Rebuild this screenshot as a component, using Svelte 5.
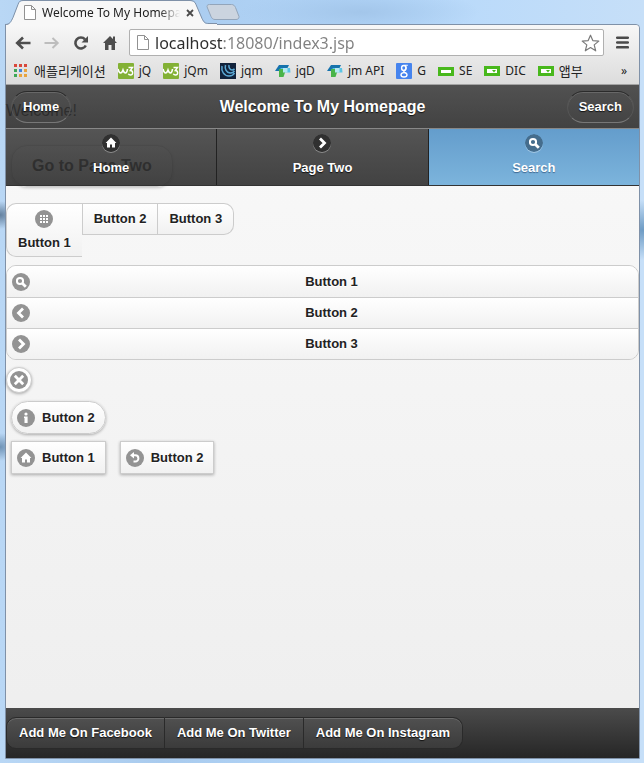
<script>
  const bookmarks = [
    { icon: 'apps', label: '애플리케이션', ko: true },
    { icon: 'w3', label: 'jQ' },
    { icon: 'w3', label: 'jQm' },
    { icon: 'jquery', label: 'jqm' },
    { icon: 'fold', label: 'jqD' },
    { icon: 'fold', label: 'jm API' },
    { icon: 'google', label: 'G' },
    { icon: 'bar', label: 'SE' },
    { icon: 'drop', label: 'DIC' },
    { icon: 'drop', label: '앱부', ko: true }
  ];
  const appColors = ['#d9483b', '#d9483b', '#d9483b', '#3fa757', '#4285dc', '#e8a33d', '#3fa757', '#e8a33d', '#e8a33d'];
  const tabs = [
    { icon: 'home', label: 'Home' },
    { icon: 'right', label: 'Page Two' },
    { icon: 'search', label: 'Search', active: true }
  ];
  const rows = [
    { icon: 'search', label: 'Button 1' },
    { icon: 'left', label: 'Button 2' },
    { icon: 'right', label: 'Button 3' }
  ];
  const socials = ['Facebook', 'Twitter', 'Instagram'];
  let url = $state('localhost:18080/index3.jsp');
</script>

{#snippet disc(name)}
  <svg class="disc" viewBox="0 0 18 18" width="18" height="18" aria-hidden="true">
    <circle class="disc-bg" cx="9" cy="9" r="9" />
    {#if name === 'home'}
      <path d="M9 3.500 3.600 9H5v4.600h3V10.500h2v3.100h3V9h1.400z" fill="#fff" />
    {:else if name === 'right'}
      <path d="m7 4.500 4.500 4.500L7 13.500" class="stroke" />
    {:else if name === 'left'}
      <path d="M11 4.500 6.500 9l4.500 4.500" class="stroke" />
    {:else if name === 'search'}
      <circle cx="8" cy="8" r="3.100" class="stroke thin" />
      <path d="m10.500 10.500 3.300 3.300" class="stroke" />
    {:else if name === 'grid'}
      {#each [5, 8, 11] as y}{#each [5, 8, 11] as x}<rect {x} {y} width="2" height="2" fill="#fff" />{/each}{/each}
    {:else if name === 'close'}
      <path d="m4.800 4.800 8.400 8.400m0-8.400-8.400 8.400" class="stroke" />
    {:else if name === 'info'}
      <circle cx="9" cy="5" r="1.600" fill="#fff" />
      <path d="M7 7.500h3.600V14H7.500V9H7z" fill="#fff" />
    {:else if name === 'back'}
      <path d="M7 6.300h2.300a3.100 3.100 0 0 1 0 6.200H7.500" class="stroke thin" />
      <path d="M8 3v6.600L4 6.300z" fill="#fff" />
    {/if}
  </svg>
{/snippet}

{#snippet sheet()}
  <svg width="12" height="15" viewBox="0 0 12 15" aria-hidden="true">
    <path d="M.5.500h7l4 4v10H.5zM7.500.500v4h4" fill="#fff" stroke="#919191" />
  </svg>
{/snippet}

<div class="desktop">
  <div class="strip">
    <div class="tab">
      <svg class="tab-shape" viewBox="0 0 216 25" width="216" height="25" aria-hidden="true">
        <path d="M0 25c5 0 6-3 8-7l5-13c1-3 2-4 5-4h167c3 0 5 1 6 4l6 14c2 4 3 5 7 5h8v1z" fill="#f7f7f7" />
        <path d="M0 24.500c5 0 6-3 8-7l5-13c1-3 2-4 5-4h167c3 0 5 1 6 4l6 14c2 4 3 5 7 5h8" fill="none" stroke="#7f91a8" />
      </svg>
      {@render sheet()}
      <span class="tab-title">Welcome To My Homepage</span>
      <button class="plain" aria-label="Close tab">
        <svg width="8" height="8" viewBox="0 0 8 8"><path d="m1 1 6 6m0-6L1 7" stroke="#4a4a4a" stroke-width="1.800" /></svg>
      </button>
    </div>
    <button class="plain new-tab" aria-label="New tab">
      <svg width="34" height="16" viewBox="0 0 34 16"><path d="M3.500.500h22c2 0 3 1 4 3l3.500 9c0 2-1 3-3 3H9c-2 0-3-1-4-3L1.500 4C.5 2 1 .5 3.500.500z" fill="#cbd4df" stroke="#93a5ba" /></svg>
    </button>
  </div>

  <div class="window">
    <div class="chrome">
      <div class="toolbar">
        <button class="plain" aria-label="Back"><svg width="16" height="14" viewBox="0 0 16 14"><path d="M15.500 7H3M8 1.500 2.200 7 8 12.500" fill="none" stroke="#4d4d4d" stroke-width="2.600" /></svg></button>
        <button class="plain" aria-label="Forward"><svg width="16" height="14" viewBox="0 0 16 14"><path d="M.5 7H13M8.500 2l5.200 5-5.200 5" fill="none" stroke="#bdbdbd" stroke-width="2" /></svg></button>
        <button class="plain" aria-label="Reload"><svg width="16" height="16" viewBox="0 0 16 16"><path d="M12.800 10.500a5.500 5.500 0 1 1-.8-6.200" fill="none" stroke="#4d4d4d" stroke-width="2.600" /><path d="M15 1v6.500H8.500z" fill="#4d4d4d" /></svg></button>
        <button class="plain" aria-label="Home page"><svg width="16" height="15" viewBox="0 0 16 15"><path d="M8 1 1 8h2v7h3.500v-5h3v5H13V8h2l-2-2V1.500h-2V4z" fill="#4d4d4d" /></svg></button>
        <div class="omnibox">
          {@render sheet()}
          <input type="text" aria-label="Address" bind:value={url} />
          <button class="plain" aria-label="Bookmark this page"><svg width="19" height="18" viewBox="0 0 19 18"><path d="m9.500 1.200 2.300 5.400 6 .5-4.600 3.800 1.500 5.900-5.200-3.200-5.200 3.200 1.500-5.900L1.200 7.100l6-.5z" fill="#fff" stroke="#7a7a7a" stroke-width="1.200" stroke-linejoin="round" /></svg></button>
        </div>
        <button class="plain" aria-label="Menu"><svg width="13" height="13" viewBox="0 0 13 13"><path d="M1.200 1.700h10.600M1.200 6.500h10.600M1.200 11.300h10.600" stroke="#4a4a4a" stroke-width="2.600" stroke-linecap="round" /></svg></button>
      </div>
      <nav class="bookmarks" aria-label="Bookmarks">
        {#each bookmarks as b}
          <a href="#bookmark" class:ko={b.ko}>
            <svg width="16" height="16" viewBox="0 0 16 16" aria-hidden="true">
              {#if b.icon === 'apps'}
                {#each appColors as c, i}<rect x={1 + (i % 3) * 5} y={1 + Math.floor(i / 3) * 5} width="3" height="3" fill={c} />{/each}
              {:else if b.icon === 'w3'}
                <rect width="16" height="16" rx="1" fill="#83b135" />
                <path d="M0 6q1 4 2.500 4T5 7q1 3 2.500 3T9.500 6" fill="none" stroke="#fff" stroke-width="1.600" />
                <path d="M10.500 4.500h4L12.300 7.500c3.200 0 3 4.500.2 4.500-1 0-1.800-.4-2.200-1.200" fill="none" stroke="#fff" stroke-width="1.400" />
              {:else if b.icon === 'jquery'}
                <rect width="16" height="16" fill="#11233c" />
                <path d="M2 3c-1 5 2 10 7 10 2.500 0 4.500-1 5.500-3M5.500 2c-1 4 1 7.500 4.500 8 2 .2 3.500-.6 4.500-2M9 2c-.5 2.500 1 5 3 5 1.200 0 2-.5 2.500-1.200" fill="none" stroke="#5ba9d6" stroke-width="1.500" />
              {:else if b.icon === 'fold'}
                <path d="M4 2h10L11 8H0z" fill="#1673ad" />
                <path d="M5 5h10l.5 4.500H10z" fill="#5bc4e4" />
                <path d="M4 6h6v3.500L8.500 14H4z" fill="#49b449" />
                <path d="M8 5h4.500v4.500H8z" fill="#b4e8f2" />
              {:else if b.icon === 'google'}
                <rect width="16" height="16" rx="1" fill="#4684ee" />
                <ellipse cx="7.800" cy="5" rx="2.200" ry="2.500" fill="none" stroke="#fff" stroke-width="1.400" />
                <ellipse cx="8" cy="11.800" rx="3" ry="2.200" fill="none" stroke="#fff" stroke-width="1.400" />
                <path d="M8.500 2.200h3.300M9.600 3.200c1.200 2-.3 3.800-1.500 4.600s.6 1.300 2 2.300" fill="none" stroke="#fff" stroke-width="1.100" />
              {:else if b.icon === 'bar'}
                <rect x="1.500" y="5.500" width="13" height="6" fill="#fff" stroke="#48b81c" stroke-width="3" />
              {:else}
                <rect y="3" width="16" height="10" fill="#48b81c" />
                <rect x="3" y="6" width="10" height="4" fill="#fff" />
                <path d="M8 7h4l-2 2.500z" fill="#48b81c" />
              {/if}
            </svg>
            <span>{b.label}</span>
          </a>
        {/each}
        <button class="plain more" aria-label="More bookmarks">»</button>
      </nav>
    </div>

    <div class="page">
      <header>
        <div class="titlebar">
          <a class="round" href="#home">Home</a>
          <h1>Welcome To My Homepage</h1>
          <a class="round" href="#search">Search</a>
        </div>
        <nav class="navbar">
          {#each tabs as t}
            <a href="#tab" class:active={t.active}>{@render disc(t.icon)}<span>{t.label}</span></a>
          {/each}
        </nav>
      </header>

      <main>
        <p>Welcome!</p>
        <a class="goto" href="#two">Go to Page Two</a>
        <div class="hgroup">
          <button class="tall">{@render disc('grid')}<span>Button 1</span></button>
          <button>Button 2</button>
          <button>Button 3</button>
        </div>
        <div class="vgroup">
          {#each rows as r}
            <button>{@render disc(r.icon)}<span>{r.label}</span></button>
          {/each}
        </div>
        <button class="icon-only" aria-label="Close">{@render disc('close')}</button>
        <div class="line"><button class="box pill">{@render disc('info')}Button 2</button></div>
        <div class="line">
          <button class="box">{@render disc('home')}Button 1</button>
          <button class="box">{@render disc('back')}Button 2</button>
        </div>
      </main>

      <footer>
        <div class="social">
          {#each socials as s}<a href="#social">Add Me On {s}</a>{/each}
        </div>
      </footer>
    </div>
  </div>
</div>

<style>
  :global(body) { margin: 0; }
  * { box-sizing: border-box; }
  a { color: inherit; text-decoration: none; }
  svg { display: block; flex: none; }
  button { font: inherit; color: inherit; cursor: pointer; }
  .plain { border: 0; background: none; padding: 0; }

  .desktop {
    min-height: 100vh;
    padding: 0 4px 4px 5px;
    display: flex;
    flex-direction: column;
    background:
      radial-gradient(ellipse 60px 30px at 100% 230px, #6d9bc4, transparent),
      radial-gradient(ellipse 20px 14px at 0 215px, #64819f, transparent),
      radial-gradient(ellipse 20px 14px at 0 447px, #6f93b6, transparent),
      radial-gradient(ellipse 120px 24px at 360px 12px, #a3c6ea, transparent),
      linear-gradient(90deg, #b9d7f5 0, #a9cbee 25%, #b5d8fb 60%, #c6dff8 100%);
    font: 12px/16px "Noto Sans", "Noto Sans CJK KR", sans-serif;
    color: #222;
  }
  .strip { display: flex; height: 24px; }
  .tab {
    position: relative;
    z-index: 1;
    display: flex;
    align-items: center;
    gap: 6px;
    width: 201px;
    height: 25px;
    padding-left: 19px;
  }
  .tab > :global(*) { position: relative; }
  .tab > .tab-shape { position: absolute; left: 0; top: 0; }
  .tab-title {
    width: 138px;
    overflow: hidden;
    white-space: nowrap;
    mask-image: linear-gradient(90deg, #000 85%, transparent);
  }
  .new-tab { align-self: center; }

  .window {
    flex: 1;
    display: flex;
    flex-direction: column;
    border: 1px solid #7f91a8;
    border-radius: 0 4px 0 0;
    background: #f7f7f7;
  }
  .chrome {
    border-bottom: 1px solid #a3a3a3;
    border-radius: 0 4px 0 0;
    background: linear-gradient(#f7f7f7, #dcdcdc);
  }
  .toolbar {
    display: flex;
    align-items: center;
    gap: 13px;
    height: 35px;
    padding: 0 10px 0 9px;
  }
  .omnibox {
    flex: 1;
    min-width: 0;
    display: flex;
    align-items: center;
    gap: 6px;
    height: 27px;
    margin: 0 -1px 0 -2px;
    padding: 0 3px 0 7px;
    border: 1px solid #b0b0b0;
    border-radius: 2px;
    background: #fff;
  }
  .omnibox input {
    flex: 1;
    min-width: 0;
    padding: 0;
    border: 0;
    font: 16px/22px "Noto Sans", "Noto Sans CJK KR", sans-serif;
    background: linear-gradient(90deg, #2c2c2c 68px, #808080 68px);
    background-clip: text;
    -webkit-text-fill-color: transparent;
  }
  .bookmarks {
    display: flex;
    align-items: center;
    gap: 12px;
    height: 24px;
    padding: 0 12px 2px 7px;
  }
  .bookmarks a { display: flex; align-items: center; gap: 5px; white-space: nowrap; }
  .bookmarks .ko { font-size: 13px; }
  .bookmarks .more { margin-left: auto; }

  .page {
    position: relative;
    flex: 1;
    display: flex;
    flex-direction: column;
    background: linear-gradient(#f9f9f9, #eee);
    font: bold 13px/18px "Liberation Sans", Arial, sans-serif;
    color: #222;
  }
  header {
    position: absolute;
    z-index: 1;
    top: 0;
    left: 0;
    right: 0;
    color: #fff;
    text-shadow: 0 1px 1px #111;
  }
  .titlebar {
    display: grid;
    grid-template-columns: 1fr auto 1fr;
    align-items: center;
    height: 43px;
    padding: 0 5px;
    background: linear-gradient(rgba(58, 58, 58, .88), rgba(41, 41, 41, .88));
  }
  h1 { margin: 0; font-size: 16px; line-height: 20px; }
  .round {
    justify-self: start;
    padding: 6px 11px;
    border: 1px solid;
    border-color: #2b2b2b #555 #777;
    border-radius: 16px;
    box-shadow: inset 0 1px #686868;
  }
  .round:last-child { justify-self: end; }
  .navbar { display: flex; border-top: 1px solid #888; border-bottom: 1px solid #333; }
  .navbar a {
    flex: 1;
    display: flex;
    flex-direction: column;
    align-items: center;
    gap: 7px;
    height: 56px;
    padding-top: 5px;
    border-right: 1px solid #222;
    background: linear-gradient(rgba(62, 62, 62, .88), rgba(41, 41, 41, .88));
  }
  .navbar a:last-child { border-right: 0; }
  .navbar .active { background: linear-gradient(#649dcc, #7cb4dc); text-shadow: 0 1px 1px #3e6790; }
  .disc-bg { fill: #939393; }
  .navbar .disc-bg { fill: #303030; }
  .navbar .active .disc-bg { fill: #456d8d; }
  .navbar .disc { border-radius: 9px; box-shadow: 0 1px rgba(255, 255, 255, .35); }
  .stroke { fill: none; stroke: #fff; stroke-width: 2.800; }
  .thin { stroke-width: 2; }

  main {
    flex: 1;
    display: flex;
    flex-direction: column;
    align-items: flex-start;
    padding: 16px 0;
    text-shadow: 0 1px #fff;
  }
  p { margin: 0 0 24px; font-size: 16px; line-height: 20px; font-weight: normal; }
  .goto {
    margin: 0 5px 16px;
    padding: 10px 20px;
    border: 1px solid #ccc;
    border-radius: 16px;
    font-size: 16px;
    line-height: 20px;
    background: linear-gradient(#fff, #f1f1f1);
    box-shadow: 0 1px 3px rgba(0, 0, 0, .2);
  }
  .hgroup { display: flex; align-items: flex-start; margin-bottom: 8px; }
  .hgroup button {
    height: 32px;
    padding: 0 11px;
    border: 1px solid #ccc;
    border-left-width: 0;
    background: linear-gradient(#fff, #f1f1f1);
    text-shadow: inherit;
  }
  .hgroup .tall {
    display: flex;
    flex-direction: column;
    align-items: center;
    gap: 6px;
    height: 54px;
    padding-top: 6px;
    border-width: 1px 0 1px 1px;
    border-radius: 10px 0 0 10px;
  }
  .hgroup .tall + button { border-left-width: 1px; }
  .hgroup button:last-child { border-radius: 0 10px 10px 0; }
  .vgroup {
    align-self: stretch;
    margin-bottom: 7px;
    border: 1px solid #ccc;
    border-radius: 10px;
    overflow: hidden;
  }
  .vgroup button {
    display: grid;
    grid-template-columns: 18px 1fr;
    align-items: center;
    width: 100%;
    height: 31px;
    padding: 0 5px;
    border: 0;
    border-top: 1px solid #ccc;
    background: linear-gradient(#fff, #f1f1f1);
    text-shadow: inherit;
  }
  .vgroup button:first-child { border-top: 0; }
  .icon-only {
    padding: 3px;
    margin: 0 0 8px;
    border: 1px solid #ccc;
    border-radius: 13px;
    background: #fff;
    box-shadow: 0 1px 3px rgba(0, 0, 0, .3);
  }
  .line { display: flex; gap: 14px; margin: 0 5px 7px; }
  .box {
    display: flex;
    align-items: center;
    gap: 7px;
    height: 33px;
    padding: 0 10px 0 5px;
    border: 1px solid #ccc;
    background: linear-gradient(#fff, #f1f1f1);
    box-shadow: 0 1px 3px rgba(0, 0, 0, .3);
    text-shadow: inherit;
  }
  .pill { border-radius: 17px; }

  footer { padding: 9px 0; background: linear-gradient(#4b4b4b, #262626); color: #fff; text-shadow: 0 1px 1px #111; }
  .social { display: flex; }
  .social a {
    padding: 6px 12px;
    border: 1px solid #2a2a2a;
    border-left-width: 0;
    background: linear-gradient(#505050, #3b3b3b);
    box-shadow: inset 0 1px #6a6a6a;
  }
  .social a:first-child { border-left-width: 1px; border-radius: 10px 0 0 10px; }
  .social a:last-child { border-radius: 0 10px 10px 0; }
</style>
